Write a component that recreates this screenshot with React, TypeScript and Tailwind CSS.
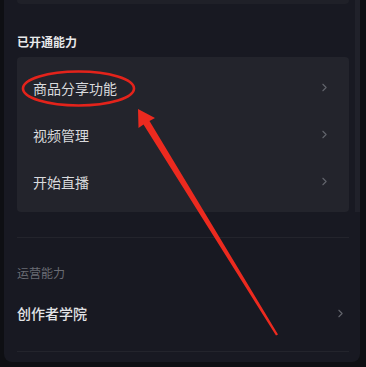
import { ChevronRight } from 'lucide-react';

const font = { fontFamily: '"Noto Sans CJK SC", "Noto Sans", sans-serif' };

function Row({ label }: { label: string }) {
  return (
    <div className="flex h-[47px] items-center justify-between pl-4 pr-[18px]">
      <span className="text-[14px] leading-none text-[#d9dadd]">{label}</span>
      <ChevronRight size={13} strokeWidth={2} className="text-[#62646c]" />
    </div>
  );
}

export default function App() {
  return (
    <div className="relative h-[367px] w-[366px] overflow-hidden bg-[#0e0f13]" style={font}>
      <div className="relative ml-[4px] h-[362px] w-[356px] rounded-b-[8px] bg-[#181922]">
        {/* scroll track */}
        <div className="absolute right-0 top-0 h-[212px] w-[5px] bg-[#20212a]" />

        <div className="pl-[13px] pr-[11px]">
          <div className="h-[4px] rounded-b-[4px] bg-[#1f2028]" />

          <h2 className="mt-[29px] text-[12px] font-semibold leading-[18px] text-[#e8e9eb]">已开通能力</h2>

          <div className="mt-[6px] rounded-[4px] bg-[#23242c] py-[7px]">
            <Row label="商品分享功能" />
            <Row label="视频管理" />
            <Row label="开始直播" />
          </div>

          <div className="mt-[25px] h-px bg-[#23242c]" />

          <p className="mt-[26px] text-[12px] leading-[18px] text-[#6a6c74]">运营能力</p>

          <div className="mt-[16px] flex h-[30px] items-center justify-between pr-[2px]">
            <span className="text-[14px] font-medium leading-none text-[#e2e3e6]">创作者学院</span>
            <ChevronRight size={13} strokeWidth={2} className="text-[#62646c]" />
          </div>

          <div className="mt-[23px] h-px bg-[#23242c]" />
        </div>
      </div>

      {/* red annotation */}
      <svg className="pointer-events-none absolute left-0 top-0" width="366" height="367" viewBox="0 0 366 367">
        <ellipse cx="78.5" cy="88.5" rx="55.5" ry="17" fill="none" stroke="#e3231b" strokeWidth="2.6" />
        <polygon
          points="138,109 155,118 149.5,121 278,334.5 276,335.5 143.5,124.5 138.5,128"
          fill="#ec2a1f"
        />
      </svg>
    </div>
  );
}
